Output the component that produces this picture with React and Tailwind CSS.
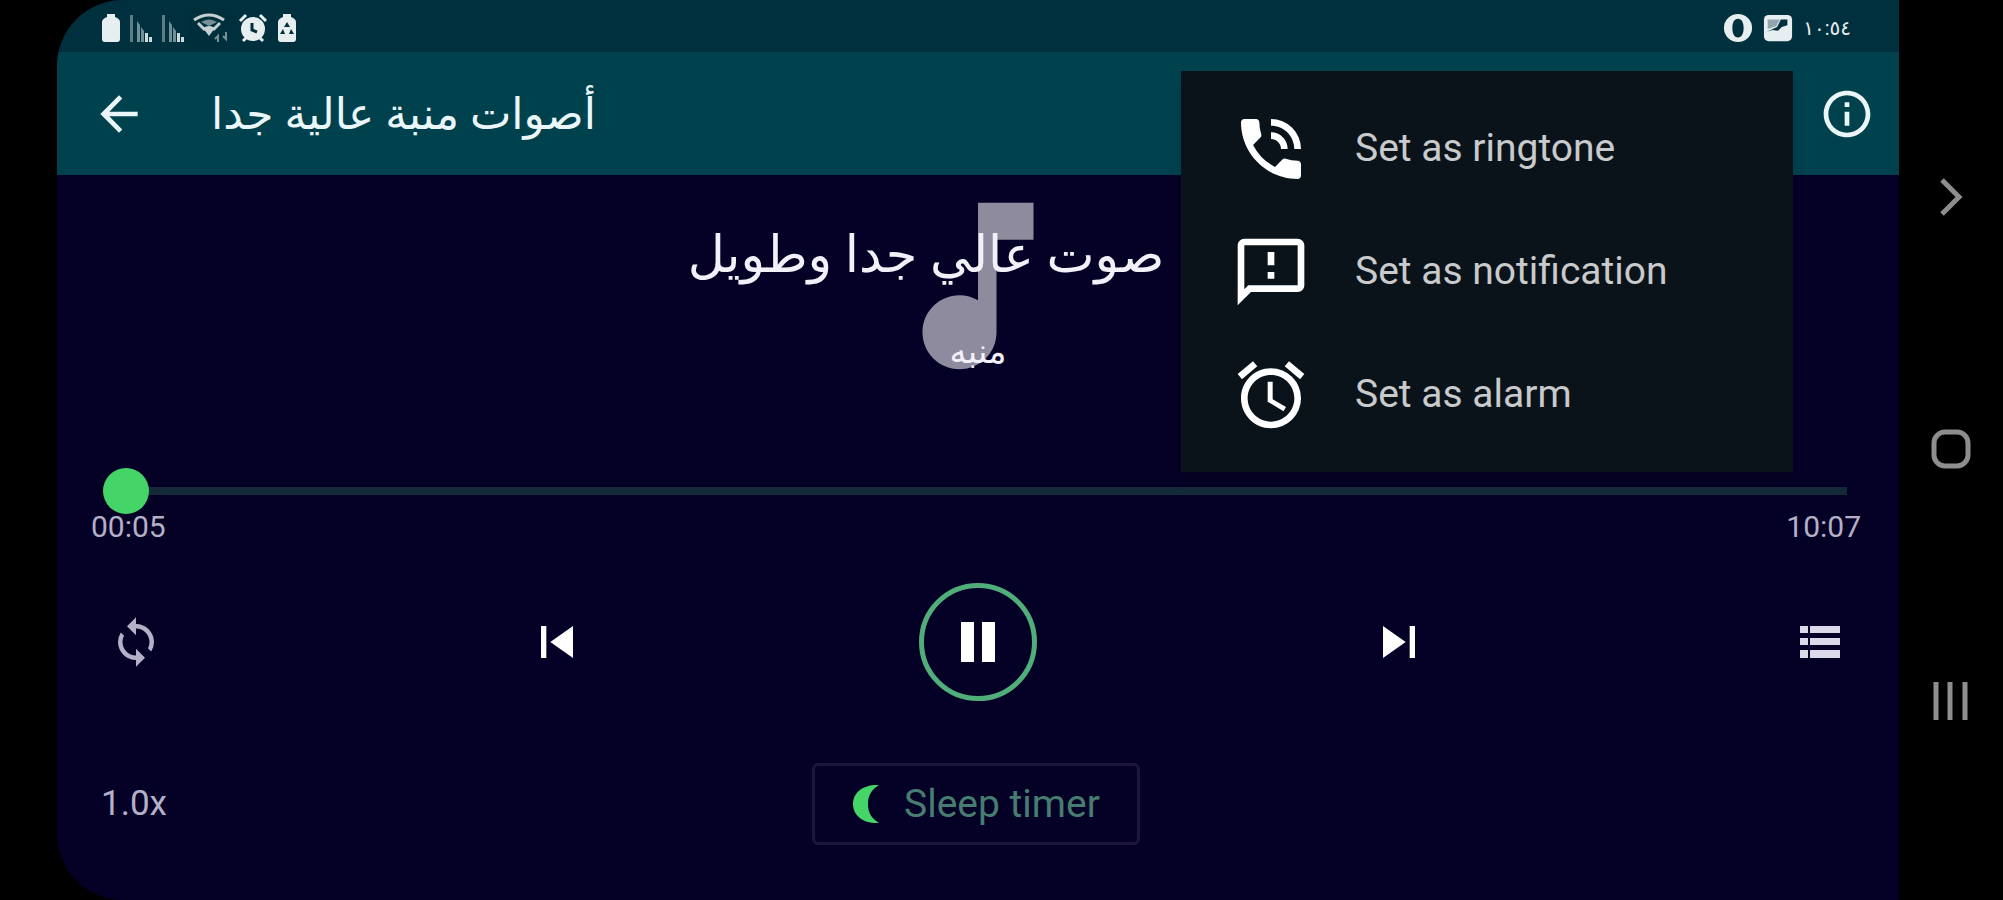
import {
  MdAlarm,
  MdArrowBack,
  MdInfoOutline,
  MdLoop,
  MdMusicNote,
  MdOutlineFeedback,
  MdPhoneInTalk,
  MdSkipNext,
  MdSkipPrevious,
} from 'react-icons/md';

const menuItems = [
  { id: 'ringtone', label: 'Set as ringtone', Icon: MdPhoneInTalk },
  { id: 'notification', label: 'Set as notification', Icon: MdOutlineFeedback },
  { id: 'alarm', label: 'Set as alarm', Icon: MdAlarm },
];

const BatteryIcon = () => (
  <svg className="h-8 w-5" viewBox="0 0 20 32" fill="currentColor">
    <path d="M6 2h8v3q5 2 5 5v17q0 3-3 3H4q-3 0-3-3V10q0-3 5-5z" />
  </svg>
);

const SignalIcon = () => (
  <svg className="h-8 w-6" viewBox="0 0 24 32" fill="currentColor">
    <path opacity=".4" d="M1 3h3v27H1z" />
    <path opacity=".5" d="M8 9l3 4v17H8zM12 15l3 4v11h-3z" />
    <path opacity=".9" d="M16 21h3v9h-3zM20 25h3v5h-3z" />
  </svg>
);

const WifiIcon = () => (
  <svg className="h-8 w-9" viewBox="0 0 36 32" fill="none" stroke="currentColor" strokeWidth="3" opacity=".85">
    <path d="M1 8q15-10 30 0" />
    <path d="M5 11l7 7M27 11l-7 7" />
    <path d="M8 10q8-5 16 0l-8 4z" fill="currentColor" stroke="none" opacity=".6" />
    <path d="M10 16q6-4 12 0l-6 8z" fill="currentColor" stroke="none" />
    <path opacity=".6" strokeWidth="2" d="M25 30v-6l-3 3M33 20v7l-3-3" />
  </svg>
);

const AlarmSolidIcon = () => (
  <svg className="h-8 w-8" viewBox="0 0 32 32">
    <g stroke="currentColor" strokeWidth="3" fill="none">
      <path d="M3 9l6-6M29 9l-6-6M6 29l5-5M26 29l-5-5" />
    </g>
    <circle cx="16" cy="17" r="12" fill="currentColor" />
    <path d="M15 11v7l5 2" fill="none" stroke="#00303d" strokeWidth="3" />
  </svg>
);

const BatterySaverIcon = () => (
  <svg className="h-8 w-5" viewBox="0 0 20 32">
    <path fill="currentColor" d="M6 2h8v3q5 2 5 5v17q0 3-3 3H4q-3 0-3-3V10q0-3 5-5z" />
    <path fill="#00303d" d="M10 10l3 5H7zM6 17l2 5H3zM14 17l3 5h-5z" />
  </svg>
);

const OperaIcon = () => (
  <svg className="size-[30px]" viewBox="0 0 32 32" fill="currentColor" fillRule="evenodd">
    <path d="M16 1a15 15 0 100 30 15 15 0 000-30zm0 5c4 0 6 4 6 10s-2 10-6 10-6-4-6-10 2-10 6-10z" />
  </svg>
);

const PictureIcon = () => (
  <svg className="size-[30px]" viewBox="0 0 32 32">
    <rect x="1" y="2" width="30" height="28" rx="5" fill="currentColor" />
    <path fill="#8fa6ac" d="M5 7h13l-4 7-9 3z" />
    <path fill="#00303d" d="M4 20l11-5 4-8h7v6l-6 2-4 4-6-1z" />
  </svg>
);

const PauseIcon = () => (
  <svg className="h-10 w-9" viewBox="0 0 36 40" fill="currentColor">
    <path d="M1 0h13v40H1zM22 0h13v40H22z" />
  </svg>
);

const QueueIcon = () => (
  <svg className="h-8 w-10" viewBox="0 0 40 32" fill="currentColor">
    <path d="M0 0h8v7H0zM10 0h30v7H10zM0 12h8v7H0zM10 12h30v7H10zM0 24h8v8H0zM10 24h30v8H10z" />
  </svg>
);

const MoonIcon = () => (
  <svg className="h-10 w-7" viewBox="0 0 28 40" fill="#45d467">
    <path d="M27 1C12 0 1 8 1 20s11 20 26 19C19 34 16 28 16 20S19 6 27 1z" />
  </svg>
);

const StatusBar = () => (
  <div className="flex h-[52px] items-center justify-between bg-[#00303d] pt-1 pr-12 pl-11 text-[#e6eef0]">
    <div className="flex items-center gap-2">
      <BatteryIcon />
      <SignalIcon />
      <SignalIcon />
      <WifiIcon />
      <AlarmSolidIcon />
      <BatterySaverIcon />
    </div>
    <div className="flex items-center gap-[10px]">
      <OperaIcon />
      <PictureIcon />
      <time dir="ltr" className="text-xl">١٠:٥٤</time>
    </div>
  </div>
);

const AppHeader = () => (
  <header className="flex h-[123px] items-center bg-[#00414e] pr-6 pl-[34px] text-[#eaf6f8]">
    <button type="button" aria-label="Back">
      <MdArrowBack className="size-14" />
    </button>
    <h1 dir="rtl" className="mr-auto ml-16 text-[44px] leading-[56px]">أصوات منبة عالية جدا</h1>
    <button type="button" aria-label="Info">
      <MdInfoOutline className="size-14" />
    </button>
  </header>
);

const SetAsMenu = () => (
  <ul role="menu" className="absolute top-[71px] right-[106px] w-[612px] bg-[#0b131a] py-4 shadow-lg">
    {menuItems.map(({ id, label, Icon }) => (
      <li key={id} role="none">
        <button
          type="button"
          role="menuitem"
          className="flex h-[123px] w-full items-center gap-11 pl-[50px] text-[39px] text-[#c8cacc]"
        >
          <Icon className="size-20 text-white" />
          {label}
        </button>
      </li>
    ))}
  </ul>
);

const NowPlaying = () => (
  <section className="grid h-[222px] justify-items-center">
    <MdMusicNote className="col-start-1 row-start-1 size-[222px] text-[#8f8b9f]" />
    <div className="col-start-1 row-start-1 flex w-full flex-col items-center pt-10 text-[#f2f0f8]">
      <h2 dir="rtl" className="mr-[104px] text-[51px] leading-[80px]">صوت عالي جدا وطويل</h2>
      <p dir="rtl" className="pt-9 text-[34px] leading-10">منبه</p>
    </div>
  </section>
);

const SeekBar = () => (
  <section className="pt-[70px] text-[#b5b0c8]">
    <div className="pr-[52px] pl-8">
      <input
        type="range"
        aria-label="Playback position"
        min="0"
        max="607"
        defaultValue="5"
        className="block h-12 w-full appearance-none bg-transparent [&::-webkit-slider-runnable-track]:h-2 [&::-webkit-slider-runnable-track]:bg-[linear-gradient(to_right,transparent_24px,#152a38_24px)] [&::-webkit-slider-thumb]:-mt-[19px] [&::-webkit-slider-thumb]:size-[46px] [&::-webkit-slider-thumb]:appearance-none [&::-webkit-slider-thumb]:rounded-full [&::-webkit-slider-thumb]:bg-[#45d467]"
      />
    </div>
    <div className="flex justify-between pr-[38px] pl-[34px] text-3xl leading-6">
      <span>00:05</span>
      <span>10:07</span>
    </div>
  </section>
);

const controlClass = 'flex h-[118px] w-[118px] items-center justify-center';

const Controls = () => (
  <section className="flex items-center justify-between px-5 pt-11 text-white">
    <button type="button" aria-label="Repeat" className={controlClass}>
      <MdLoop className="size-[54px] text-[#b5b0c8]" />
    </button>
    <button type="button" aria-label="Previous" className={controlClass}>
      <MdSkipPrevious className="size-16" />
    </button>
    <button
      type="button"
      aria-label="Pause"
      className="flex h-[118px] w-[118px] items-center justify-center rounded-full border-[5px] border-[#4fae79]"
    >
      <PauseIcon />
    </button>
    <button type="button" aria-label="Next" className={controlClass}>
      <MdSkipNext className="size-16" />
    </button>
    <button type="button" aria-label="Queue" className={`${controlClass} text-[#dcd9e8]`}>
      <QueueIcon />
    </button>
  </section>
);

const BottomRow = () => (
  <section className="grid grid-cols-3 items-center pt-[62px] pr-12 pl-11">
    <button type="button" className="justify-self-start text-[35px] text-[#b5b0c8]">1.0x</button>
    <button
      type="button"
      className="flex h-[82px] w-[328px] items-center justify-center gap-6 justify-self-center rounded-md border-[3px] border-[#1b1538] text-[39px] text-[#457d70]"
    >
      <MoonIcon />
      Sleep timer
    </button>
  </section>
);

const NavBar = () => (
  <nav className="flex w-[104px] flex-col items-center justify-between pt-[177px] pb-[179px] text-[#8e8e8e]">
    <button type="button" aria-label="Navigate back">
      <svg className="size-10" viewBox="0 0 40 40" fill="none" stroke="currentColor" strokeWidth="5">
        <path d="M11 3l17 17-17 17" />
      </svg>
    </button>
    <button type="button" aria-label="Home">
      <svg className="size-10" viewBox="0 0 40 40" fill="none" stroke="currentColor" strokeWidth="5">
        <rect x="3" y="3" width="34" height="34" rx="11" />
      </svg>
    </button>
    <button type="button" aria-label="Recent apps">
      <svg className="size-10" viewBox="0 0 40 40" stroke="currentColor" strokeWidth="5">
        <path d="M5 1v38M19 1v38M34 1v38" />
      </svg>
    </button>
  </nav>
);

const App = () => (
  <div className="flex min-h-screen bg-black pl-[57px] font-[Roboto,'DejaVu_Sans',sans-serif]">
    <main className="relative flex-1 overflow-hidden rounded-l-[66px] bg-[#050026]">
      <StatusBar />
      <AppHeader />
      <NowPlaying />
      <SeekBar />
      <Controls />
      <BottomRow />
      <SetAsMenu />
    </main>
    <NavBar />
  </div>
);

export default App;
